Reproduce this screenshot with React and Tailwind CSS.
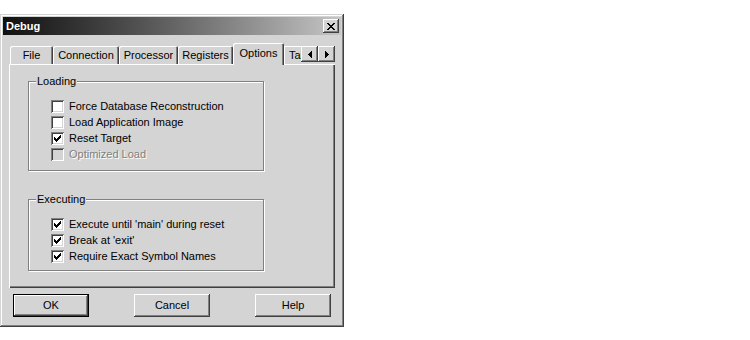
import React from "react";

function Check() {
  const px = [
    [6, 0], [5, 1], [6, 1], [0, 2], [4, 2], [5, 2], [6, 2],
    [0, 3], [1, 3], [3, 3], [4, 3], [5, 3],
    [0, 4], [1, 4], [2, 4], [3, 4], [4, 4],
    [1, 5], [2, 5], [3, 5], [2, 6],
  ];
  return (
    <svg width="7" height="7" viewBox="0 0 7 7" shapeRendering="crispEdges">
      {px.map(([x, y], i) => (
        <rect key={i} x={x} y={y} width="1" height="1" fill="#000" />
      ))}
    </svg>
  );
}

function CheckRow({ label, checked, disabled }) {
  return (
    <div className="flex items-center h-[16px]">
      <div
        className={
          "w-[13px] h-[13px] flex items-center justify-center shadow-[inset_1px_1px_#808080,inset_-1px_-1px_#ffffff,inset_2px_2px_#404040,inset_-2px_-2px_#d4d4d4] " +
          (disabled ? "bg-[#d4d4d4]" : "bg-white")
        }
      >
        {checked && <Check />}
      </div>
      <span
        className={
          "ml-[5px] text-[11px] leading-[13px] " +
          (disabled ? "text-[#808080] [text-shadow:1px_1px_0_#ffffff]" : "text-black")
        }
      >
        {label}
      </span>
    </div>
  );
}

function Group({ title, children, className }) {
  return (
    <div
      className={
        "relative w-[236px] border border-[#808080] shadow-[1px_1px_0_#ffffff,inset_1px_1px_0_#ffffff] " +
        className
      }
    >
      <span className="absolute left-[7px] top-[-7px] bg-[#d4d4d4] px-[1px] text-[11px] leading-[13px] text-black">
        {title}
      </span>
      <div className="pl-[22px] pt-[16px] flex flex-col">{children}</div>
    </div>
  );
}

function Tab({ label, w, selected }) {
  return (
    <div
      className={
        "flex items-center justify-center shrink-0 text-[11px] text-black bg-[#d4d4d4] rounded-t-[2px] " +
        (selected
          ? "h-[22px] relative z-10 mb-[-1px] pb-[2px] shadow-[inset_1px_1px_#ffffff,inset_-1px_0_#404040,inset_-2px_0_#808080]"
          : "h-[18px] shadow-[inset_1px_1px_#ffffff,inset_-1px_0_#404040,inset_-2px_0_#808080]")
      }
      style={{ width: w }}
    >
      {label}
    </div>
  );
}

function ArrowBtn({ dir }) {
  return (
    <div className="w-[17px] h-[16px] bg-[#d4d4d4] flex items-center justify-center shadow-[inset_-1px_-1px_#404040,inset_1px_1px_#ffffff,inset_-2px_-2px_#808080]">
      <svg width="4" height="7" viewBox="0 0 4 7" shapeRendering="crispEdges">
        {dir === "left" ? (
          <path d="M4 0 L0 3.5 L4 7 Z" fill="#000" />
        ) : (
          <path d="M0 0 L4 3.5 L0 7 Z" fill="#000" />
        )}
      </svg>
    </div>
  );
}

function Button({ label, def }) {
  return (
    <div
      className={
        "w-[76px] h-[23px] bg-[#d4d4d4] flex items-center justify-center text-[11px] text-black " +
        (def
          ? "shadow-[inset_0_0_0_1px_#000000,inset_-2px_-2px_#404040,inset_2px_2px_#ffffff,inset_-3px_-3px_#808080]"
          : "shadow-[inset_-1px_-1px_#404040,inset_1px_1px_#ffffff,inset_-2px_-2px_#808080]")
      }
    >
      {label}
    </div>
  );
}

export default function App() {
  return (
    <div className="w-[750px] h-[340px] bg-white font-['Liberation_Sans',Arial,sans-serif]">
      <div className="pt-[14px]">
        <div className="w-[344px] h-[313px] bg-[#d4d4d4] p-[3px] flex flex-col shadow-[inset_-1px_-1px_#404040,inset_1px_1px_#d4d4d4,inset_-2px_-2px_#808080,inset_2px_2px_#ffffff]">
          {/* Title bar */}
          <div className="h-[18px] flex items-center justify-between pl-[3px] pr-[2px] bg-linear-to-r from-[#111111] to-[#c6c6c6]">
            <span className="text-white font-bold text-[11px] leading-[13px]">Debug</span>
            <div className="w-[16px] h-[14px] bg-[#d4d4d4] flex items-center justify-center shadow-[inset_-1px_-1px_#404040,inset_1px_1px_#ffffff,inset_-2px_-2px_#808080]">
              <svg width="8" height="7" viewBox="0 0 8 7" shapeRendering="crispEdges">
                <path d="M0 0h2v1h-2z M6 0h2v1h-2z M1 1h2v1h-2z M5 1h2v1h-2z M2 2h4v1h-4z M3 3h2v1h-2z M2 4h4v1h-4z M1 5h2v1h-2z M5 5h2v1h-2z M0 6h2v1h-2z M6 6h2v1h-2z" fill="#000" />
              </svg>
            </div>
          </div>

          {/* Tabs */}
          <div className="mt-[5px] ml-[6px] w-[326px] flex items-end h-[24px]">
            <div className="w-[1px] shrink-0" />
            <Tab label="File" w={43} />
            <Tab label="Connection" w={66} />
            <Tab label="Processor" w={59} />
            <Tab label="Registers" w={55} />
            <Tab label="Options" w={51} selected />
            <div className="w-[17px] h-[18px] overflow-hidden shrink-0">
              <div className="w-[44px] h-[18px] pl-[5px] flex items-center text-[11px] text-black shadow-[inset_1px_1px_#ffffff]">
                Tables
              </div>
            </div>
            <div className="flex self-start mt-[6px] shrink-0">
              <ArrowBtn dir="left" />
              <ArrowBtn dir="right" />
            </div>
          </div>

          {/* Panel */}
          <div className="ml-[6px] w-[326px] h-[224px] bg-[#d4d4d4] pl-[19px] pt-[17px] shadow-[inset_1px_1px_#ffffff,inset_-1px_-1px_#404040,inset_-2px_-2px_#808080]">
            <Group title="Loading" className="h-[90px]">
              <CheckRow label="Force Database Reconstruction" />
              <CheckRow label="Load Application Image" />
              <CheckRow label="Reset Target" checked />
              <CheckRow label="Optimized Load" disabled />
            </Group>
            <Group title="Executing" className="h-[72px] mt-[28px]">
              <CheckRow label="Execute until 'main' during reset" checked />
              <CheckRow label="Break at 'exit'" checked />
              <CheckRow label="Require Exact Symbol Names" checked />
            </Group>
          </div>

          {/* Buttons */}
          <div className="mt-[6px] px-[10px] flex justify-between">
            <Button label="OK" def />
            <Button label="Cancel" />
            <Button label="Help" />
          </div>
        </div>
      </div>
    </div>
  );
}
